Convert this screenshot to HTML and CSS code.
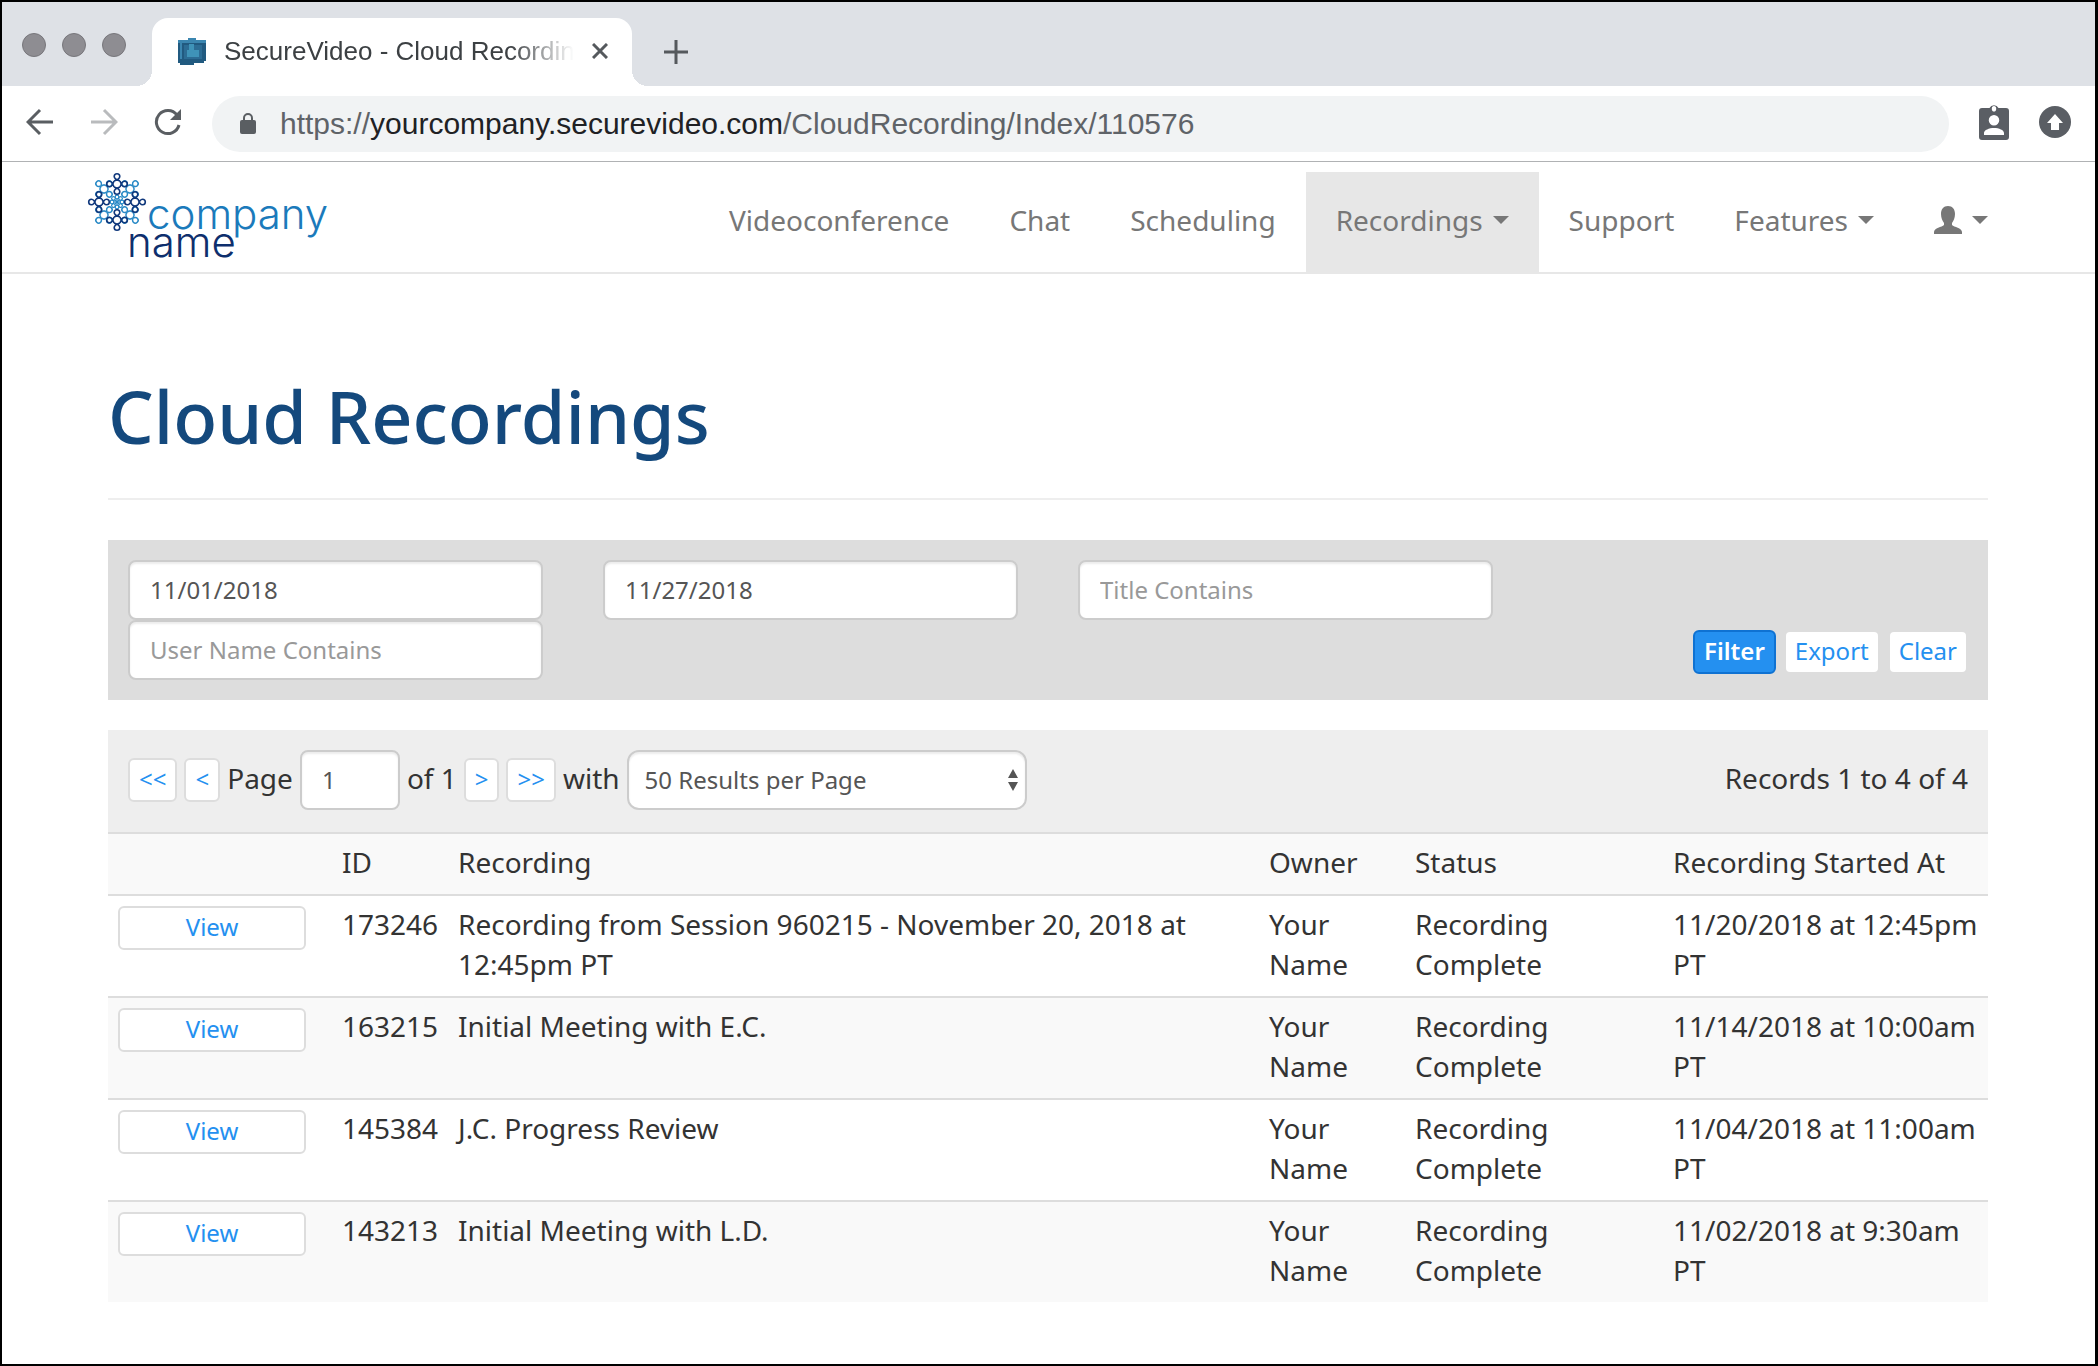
FILE: index.html
```html
<!DOCTYPE html>
<html lang="en">
<head>
<meta charset="utf-8">
<title>SecureVideo - Cloud Recordings</title>
<link rel="stylesheet" href="styles.css">
</head>
<body>
<div class="window">
  <header class="tabstrip">
    <div class="lights"><span class="light"></span><span class="light"></span><span class="light"></span></div>
    <div class="tab">
      <svg class="favicon" viewBox="0 0 28 28" aria-hidden="true">
        <path fill="#215a80" d="M0 3h10V1h8v2h10v21h-2v2H16v2H2v-2H0z"/>
        <path fill="#3b86b0" d="M0 3h10V1h8v2h10v3H4v16H2V6H0z"/>
        <path fill="#2c6c94" d="M6 8h18v14H6z"/>
        <path fill="#3f93b8" d="M11 7h5v6h5v7H9v-7h2z"/>
      </svg>
      <span class="tab-title">SecureVideo - Cloud Recordings</span>
      <button class="icon-btn" aria-label="Close tab"><svg width="16" height="16" viewBox="0 0 16 16"><path d="M1 1l14 14M15 1L1 15" stroke="#55595d" stroke-width="3" fill="none"/></svg></button>
    </div>
    <button class="icon-btn new-tab" aria-label="New tab"><svg width="24" height="24" viewBox="0 0 24 24"><path d="M12 0v24M0 12h24" stroke="#55595d" stroke-width="3" fill="none"/></svg></button>
  </header>
  <div class="toolbar">
    <div class="history">
      <button class="icon-btn" aria-label="Back"><svg width="28" height="28" viewBox="0 0 28 28"><path d="M27 14H3M14 2L2 14l12 12" stroke="#5a5e62" stroke-width="3" fill="none"/></svg></button>
      <button class="icon-btn" aria-label="Forward"><svg width="28" height="28" viewBox="0 0 28 28"><path d="M1 14h24M14 2l12 12-12 12" stroke="#b9bbbd" stroke-width="3" fill="none"/></svg></button>
      <button class="icon-btn" aria-label="Reload"><svg width="28" height="28" viewBox="0 0 28 28"><path d="M23 7A11.500 11.500 0 1 0 25 17" stroke="#5a5e62" stroke-width="3" fill="none"/><path d="M27 1v11H16z" fill="#5a5e62"/></svg></button>
    </div>
    <div class="address">
      <svg width="16" height="22" viewBox="0 0 16 22" aria-hidden="true"><rect y="7" width="16" height="14" rx="2" fill="#5a5e62"/><path d="M4 8V5a4 4 0 0 1 8 0v3" stroke="#5a5e62" stroke-width="2" fill="none"/></svg>
      <span class="url">https://<span class="host">yourcompany.securevideo.com</span>/CloudRecording/Index/110576</span>
    </div>
    <button class="icon-btn" aria-label="Account badge"><svg width="30" height="38" viewBox="0 0 30 38"><path fill="#5a5e64" fill-rule="evenodd" d="M3 5h7.500a5 5 0 0 1 9 0H27a3 3 0 0 1 3 3v26a3 3 0 0 1-3 3H3a3 3 0 0 1-3-3V8a3 3 0 0 1 3-3zM15 3a2.200 2.800 0 1 0 0 5.600A2.200 2.800 0 1 0 15 3zM15 12a5 5 0 1 0 0 10.500A5 5 0 1 0 15 12zM5 32h20v-2c0-3-5-5-10-5s-10 2-10 5z"/></svg></button>
    <button class="icon-btn" aria-label="Update"><svg width="32" height="32" viewBox="0 0 32 32"><circle cx="16" cy="16" r="16" fill="#5a5e64"/><path fill="#fff" d="M16 8l8 9h-4v7h-8v-7H8z"/></svg></button>
  </div>

  <nav class="navbar">
    <a class="logo" href="#" aria-label="company name">
      <svg class="logo-mark" viewBox="-30 -30 60 60" aria-hidden="true">
        <defs>
          <path id="loop" d="M-3-3C0-4 2.800-5 2.800-7.500a2.800 2.800 0 1 0-5.600 0C-2.800-5 0-4 3-3"/>
          <g id="knot">
            <use href="#loop"/><use href="#loop" transform="rotate(90)"/><use href="#loop" transform="rotate(180)"/><use href="#loop" transform="rotate(270)"/>
          </g>
          <g id="star">
            <circle cy="-5" r="1.800"/><path d="M0 0v-3"/>
          </g>
        </defs>
        <g fill="none" stroke="#2a8ac6" stroke-width="1.500">
          <use href="#knot" transform="translate(13 -13) rotate(45)"/>
          <use href="#knot" transform="translate(13 13) rotate(45)"/>
          <use href="#knot" transform="translate(-13 13) rotate(45)"/>
          <use href="#knot" transform="translate(-13 -13) rotate(45)"/>
          <g stroke-width="1.200">
            <use href="#star"/><use href="#star" transform="rotate(45)"/><use href="#star" transform="rotate(90)"/><use href="#star" transform="rotate(135)"/>
            <use href="#star" transform="rotate(180)"/><use href="#star" transform="rotate(225)"/><use href="#star" transform="rotate(270)"/><use href="#star" transform="rotate(315)"/>
          </g>
        </g>
        <g fill="none" stroke="#10387c" stroke-width="1.600">
          <use href="#knot" transform="translate(0 -18)"/>
          <use href="#knot" transform="translate(18 0)"/>
          <use href="#knot" transform="translate(0 18)"/>
          <use href="#knot" transform="translate(-18 0)"/>
        </g>
      </svg>
      <span class="logo-company">company</span>
      <span class="logo-name">name</span>
    </a>
    <ul class="menu">
      <li><a href="#">Videoconference</a></li>
      <li><a href="#">Chat</a></li>
      <li><a href="#">Scheduling</a></li>
      <li><a class="active" href="#">Recordings<span class="caret"></span></a></li>
      <li><a href="#">Support</a></li>
      <li><a href="#">Features<span class="caret"></span></a></li>
      <li><a href="#" aria-label="Account"><svg width="28" height="28" viewBox="0 0 28 28"><path fill="#777" d="M14 0c4.500 0 7 3 7 8 0 4-1.500 7-3 9v2c2 2 10 3 10 7v2H0v-2c0-4 8-5 10-7v-2c-1.500-2-3-5-3-9 0-5 2.500-8 7-8z"/></svg><span class="caret"></span></a></li>
    </ul>
  </nav>

  <main class="page">
    <h1>Cloud Recordings</h1>
    <form class="filters">
      <input class="field" type="text" value="11/01/2018" aria-label="From date">
      <input class="field" type="text" value="11/27/2018" aria-label="To date">
      <input class="field" type="text" placeholder="Title Contains" aria-label="Title Contains">
      <input class="field user" type="text" placeholder="User Name Contains" aria-label="User Name Contains">
      <div class="actions">
        <button class="btn primary" type="button">Filter</button>
        <button class="btn" type="button">Export</button>
        <button class="btn" type="button">Clear</button>
      </div>
    </form>

    <section class="results">
      <div class="pager">
        <button class="btn" type="button">&lt;&lt;</button>
        <button class="btn" type="button">&lt;</button>
        <label class="pager-text" for="page">Page</label>
        <input class="field page-no" id="page" type="text" value="1">
        <span class="pager-text">of 1</span>
        <button class="btn" type="button">&gt;</button>
        <button class="btn" type="button">&gt;&gt;</button>
        <label class="pager-text" for="size">with</label>
        <span class="select-wrap">
          <select class="field" id="size"><option>50 Results per Page</option></select>
          <svg class="arrows" width="12" height="22" viewBox="0 0 12 22" aria-hidden="true"><path fill="#555" d="M6 0l5 9H1zM6 22l5-9H1z"/></svg>
        </span>
        <span class="pager-text count">Records 1 to 4 of 4</span>
      </div>
      <table class="grid">
        <colgroup><col class="c-view"><col class="c-id"><col><col class="c-owner"><col class="c-status"><col class="c-date"></colgroup>
        <thead>
          <tr><th></th><th>ID</th><th>Recording</th><th>Owner</th><th>Status</th><th>Recording Started At</th></tr>
        </thead>
        <tbody>
          <tr><td><button class="btn view" type="button">View</button></td><td>173246</td><td>Recording from Session 960215 - November 20, 2018 at 12:45pm PT</td><td>Your Name</td><td>Recording Complete</td><td>11/20/2018 at 12:45pm PT</td></tr>
          <tr><td><button class="btn view" type="button">View</button></td><td>163215</td><td>Initial Meeting with E.C.</td><td>Your Name</td><td>Recording Complete</td><td>11/14/2018 at 10:00am PT</td></tr>
          <tr><td><button class="btn view" type="button">View</button></td><td>145384</td><td>J.C. Progress Review</td><td>Your Name</td><td>Recording Complete</td><td>11/04/2018 at 11:00am PT</td></tr>
          <tr><td><button class="btn view" type="button">View</button></td><td>143213</td><td>Initial Meeting with L.D.</td><td>Your Name</td><td>Recording Complete</td><td>11/02/2018 at 9:30am PT</td></tr>
        </tbody>
      </table>
    </section>
  </main>
</div>
</body>
</html>
```
FILE: styles.css
```css
* { box-sizing: border-box; }

body {
  margin: 0;
  background: #fff;
  color: #333;
  font: 28px/40px "Noto Sans", sans-serif;
}

button, input, select { font: inherit; margin: 0; }
a { color: inherit; text-decoration: none; }

.window {
  min-height: 100vh;
  border: 2px solid #000;
  border-right-width: 3px;
  border-bottom-width: 3px;
}

/* browser chrome */
.icon-btn {
  display: flex;
  padding: 0;
  border: 0;
  background: none;
}

.tabstrip {
  display: flex;
  height: 84px;
  padding-top: 16px;
  background: #dee1e6;
  font: 26px/32px "Liberation Sans", sans-serif;
  color: #3c4043;
}

.lights {
  display: flex;
  gap: 16px;
  padding: 15px 26px 0 20px;
}

.light {
  width: 24px;
  height: 24px;
  border: 1px solid #77767b;
  border-radius: 50%;
  background: #8e8d92;
}

.tab {
  position: relative;
  display: flex;
  align-items: center;
  width: 480px;
  padding: 0 24px 2px 26px;
  border-radius: 16px 16px 0 0;
  background: #fff;
}

.tab::before, .tab::after {
  content: "";
  position: absolute;
  bottom: 0;
  width: 16px;
  height: 16px;
}

.tab::before { right: 100%; background: radial-gradient(circle at 0 0, transparent 16px, #fff 16px); }
.tab::after { left: 100%; background: radial-gradient(circle at 100% 0, transparent 16px, #fff 16px); }

.favicon { width: 28px; height: 28px; }

.tab-title {
  flex: 1;
  margin: 0 18px;
  overflow: hidden;
  white-space: nowrap;
  -webkit-mask-image: linear-gradient(to left, transparent, #000 64px);
  mask-image: linear-gradient(to left, transparent, #000 64px);
}

.new-tab { padding: 22px 32px; }

.toolbar {
  display: flex;
  align-items: center;
  gap: 30px;
  height: 76px;
  padding: 0 24px;
  border-bottom: 1px solid #b0b2b4;
}

.toolbar .icon-btn { padding-bottom: 4px; }

.history { display: flex; gap: 36px; }

.address {
  flex: 1;
  display: flex;
  align-items: center;
  gap: 24px;
  height: 56px;
  padding: 0 28px;
  border-radius: 28px;
  background: #f1f3f4;
}

.url { font: 30px/32px "Liberation Sans", sans-serif; color: #5f6368; }
.host { color: #202124; }

/* site navigation */
.navbar {
  display: flex;
  justify-content: space-between;
  height: 112px;
  padding: 10px 77px 0 85px;
  border-bottom: 2px solid #e7e7e7;
  color: #777;
}

.logo {
  display: grid;
  grid-template: 62px 28px / 40px 20px auto;
  font: 300 42px/40px Inter, sans-serif;
}

.logo-mark { grid-area: 1 / 1 / 2 / 3; width: 60px; height: 60px; }
.logo-company { grid-area: 1 / 3; align-self: end; color: #1b7abb; }
.logo-name { grid-area: 2 / 2 / 3 / 4; align-self: end; color: #0e2f6d; }

.menu {
  display: flex;
  margin: 0;
  padding: 0;
  list-style: none;
}

.menu a {
  display: flex;
  align-items: center;
  height: 100px;
  padding: 0 30px 4px;
}

.menu .active { background: #e7e7e7; }

.caret {
  margin-left: 10px;
  border: 8px solid transparent;
  border-top-color: #777;
  border-bottom: 0;
}

/* page */
.page { padding: 96px 107px 62px 106px; }

h1 {
  margin: 0 0 40px;
  padding-bottom: 36px;
  border-bottom: 2px solid #eee;
  color: #14497d;
  font-size: 72px;
  font-weight: 500;
  line-height: 92px;
}

.field {
  width: 100%;
  height: 60px;
  padding: 0 20px 2px;
  border: 2px solid #ccc;
  border-radius: 8px;
  background: #fff;
  box-shadow: inset 0 2px 2px rgba(0, 0, 0, .08);
  color: #555;
  font-size: 24px;
}

.field::placeholder { color: #999; opacity: 1; }

.filters {
  display: grid;
  grid-template-columns: repeat(4, 1fr);
  column-gap: 60px;
  padding: 20px;
  margin-bottom: 30px;
  background: #ddd;
}

.user { grid-row: 2; }

.actions {
  grid-area: 2 / 4;
  display: flex;
  justify-content: flex-end;
  align-items: flex-end;
  gap: 8px;
  padding-bottom: 6px;
}

.btn {
  height: 44px;
  padding: 0 9px 2px;
  border: 2px solid #ddd;
  border-radius: 6px;
  background: #fff;
  color: #2490f0;
  font-size: 24px;
  line-height: 36px;
}

.btn.primary {
  border-color: #0f72d2;
  background: #2490f0;
  color: #fff;
  font-weight: 600;
}

.pager {
  display: flex;
  align-items: center;
  gap: 7px;
  height: 102px;
  padding: 0 20px 2px;
  background: #eee;
}

.pager-text { padding-bottom: 4px; }

.page-no { width: 100px; }

.select-wrap { position: relative; width: 400px; }
.select-wrap select { display: block; appearance: none; padding: 0 16px; border-radius: 12px; }
.arrows { position: absolute; right: 8px; top: 19px; }
.count { margin-left: auto; }

.grid {
  width: 100%;
  table-layout: fixed;
  border-collapse: collapse;
}

.grid th, .grid td {
  padding: 8px 10px 12px;
  border-top: 2px solid #ddd;
  text-align: left;
  vertical-align: top;
  font-weight: 400;
}

.grid th:last-child, .grid td:last-child { padding-right: 4px; }

.grid thead tr, .grid tbody tr:nth-child(even) { background: #f9f9f9; }

.c-view { width: 224px; }
.c-id { width: 116px; }
.c-owner { width: 146px; }
.c-status { width: 258px; }
.c-date { width: 325px; }

.view { display: block; width: 188px; margin-top: 2px; }
```
